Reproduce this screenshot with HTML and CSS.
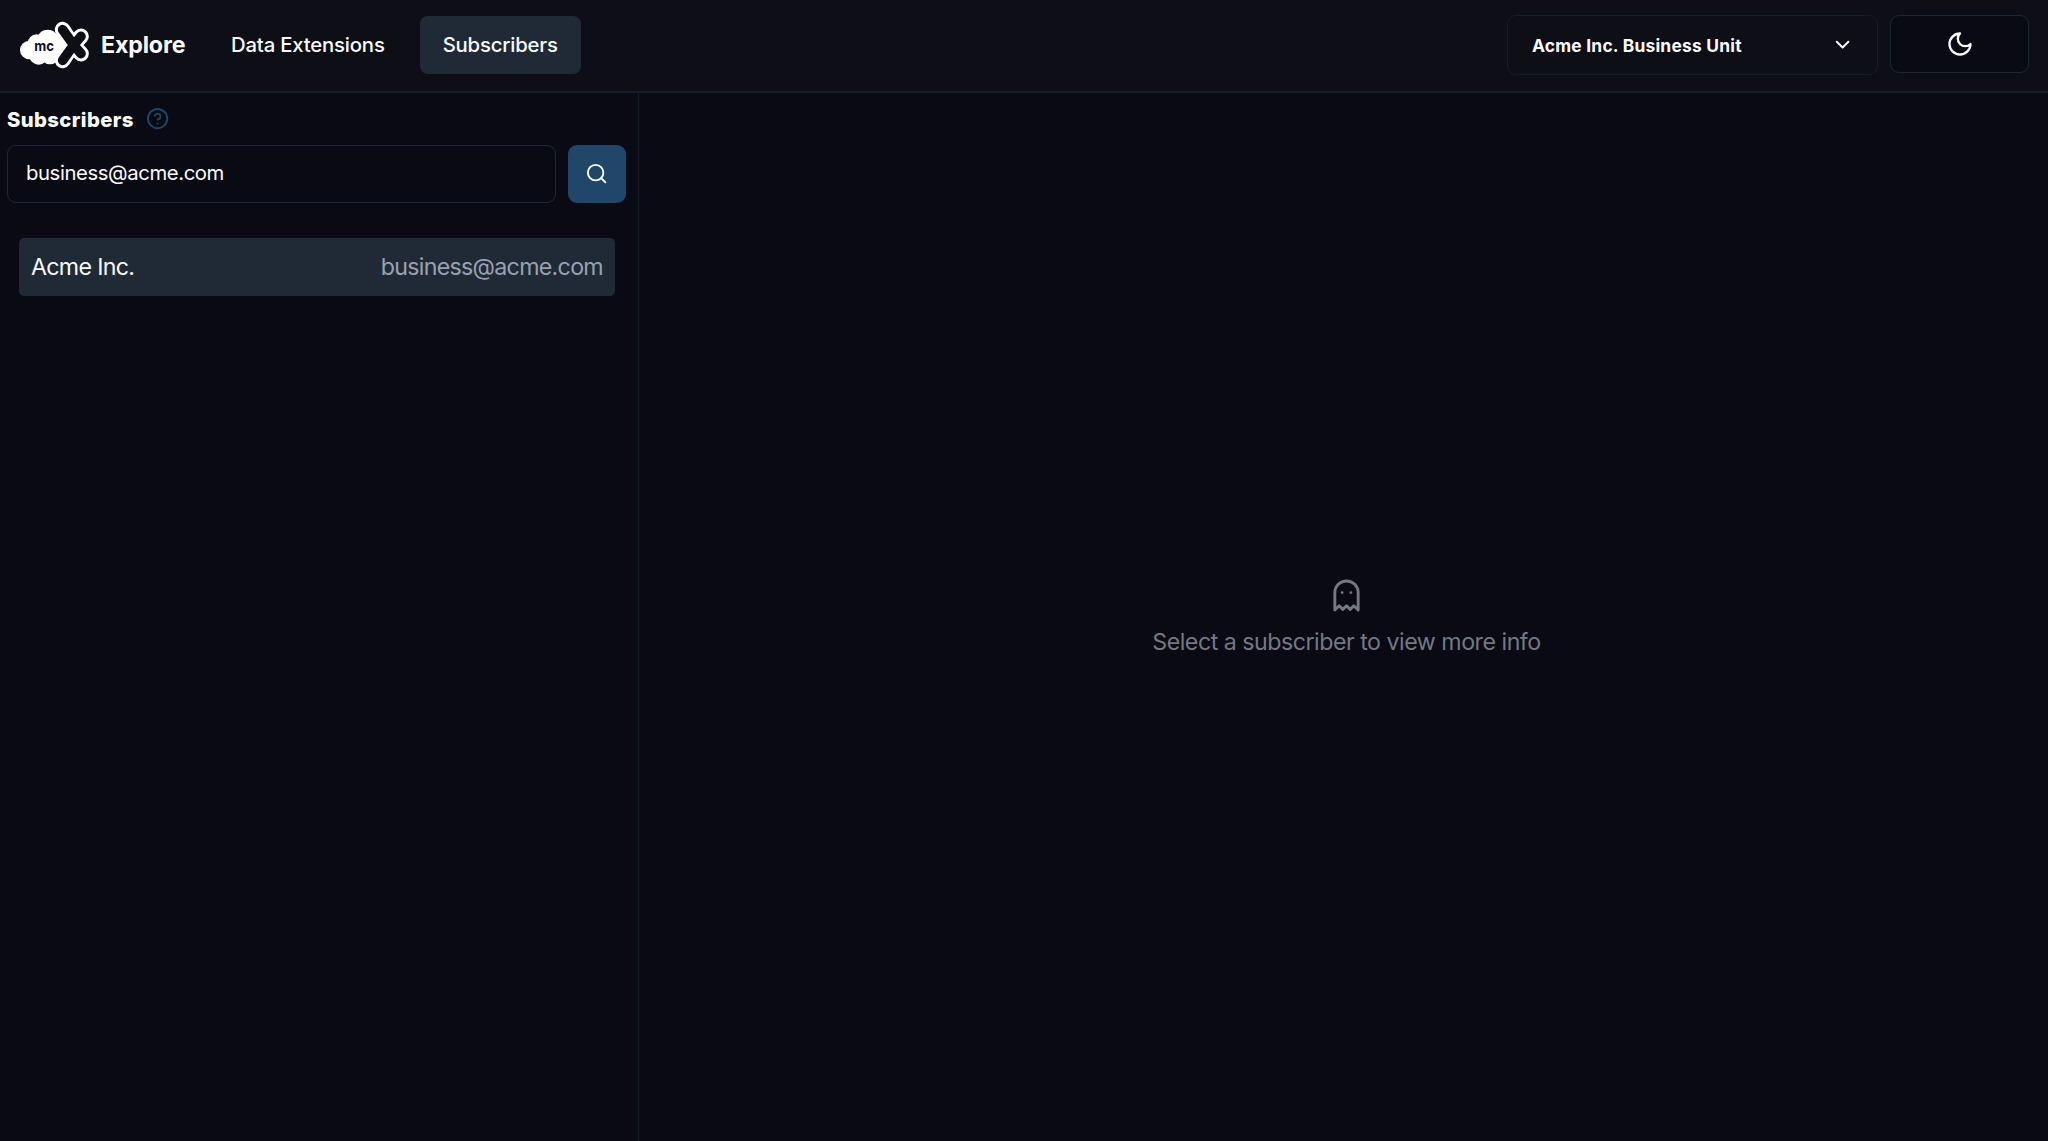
FILE: index.html
```html
<!DOCTYPE html>
<html lang="en">
<head>
    <meta charset="UTF-8">
    <meta name="viewport" content="width=device-width, initial-scale=1.0">
    <title>MC Explore</title>
    <link rel="stylesheet" href="styles.css">
</head>
<body>
    <header class="topbar">
        <div class="brand">
            <svg class="logo" viewBox="57 60 213 150" aria-hidden="true">
                <g fill="#fff">
                    <circle cx="88" cy="150" r="28"/>
                    <circle cx="110" cy="130" r="27"/>
                    <circle cx="143" cy="122" r="33"/>
                    <circle cx="116" cy="165" r="29"/>
                    <circle cx="150" cy="164" r="29"/>
                    <path d="M140 100h30l40 35-40 45h-30z"/>
                </g>
                <path class="cross-outer" d="M188 89l30 46-30 46M243 109l-25 26 25 26"/>
                <path class="cross-inner" d="M188 89l33 46-33 46M243 109l-22 26 22 26"/>
                <text class="logo-text" x="103" y="153" textLength="59" lengthAdjust="spacingAndGlyphs">mc</text>
            </svg>
            <span class="brand-name">Explore</span>
        </div>
        <nav class="tabs">
            <a class="tab">Data Extensions</a>
            <a class="tab active">Subscribers</a>
        </nav>
        <div class="actions">
            <button class="unit-select">
                <span>Acme Inc. Business Unit</span>
                <svg class="icon" viewBox="0 0 24 24"><path d="m6 9 6 6 6-6"/></svg>
            </button>
            <button class="theme-toggle" aria-label="Toggle theme">
                <svg class="icon" viewBox="0 0 24 24"><path d="M12 3a6 6 0 0 0 9 9 9 9 0 1 1-9-9Z"/></svg>
            </button>
        </div>
    </header>

    <div class="content">
        <aside class="sidebar">
            <div class="sidebar-title">
                <h1>Subscribers</h1>
                <svg class="icon help" viewBox="0 0 24 24">
                    <circle cx="12" cy="12" r="10"/>
                    <path d="M9.09 9a3 3 0 0 1 5.83 1c0 2-3 3-3 3M12 17h.01"/>
                </svg>
            </div>
            <div class="search">
                <input class="search-input" type="text" value="business@acme.com">
                <button class="search-button" aria-label="Search">
                    <svg class="icon" viewBox="0 0 24 24"><circle cx="11" cy="11" r="8"/><path d="m21 21-4.3-4.3"/></svg>
                </button>
            </div>
            <div class="results">
                <div class="result">
                    <span>Acme Inc.</span>
                    <span class="result-email">business@acme.com</span>
                </div>
            </div>
        </aside>
        <main class="empty">
            <svg class="icon ghost" viewBox="0 0 24 24">
                <path d="M9 10h.01M15 10h.01M12 2a8 8 0 0 0-8 8v12l3-3 2.5 2.5L12 19l2.5 2.5L17 19l3 3V10a8 8 0 0 0-8-8z"/>
            </svg>
            <p>Select a subscriber to view more info</p>
        </main>
    </div>
</body>
</html>
```

FILE: styles.css
```css
* {
    box-sizing: border-box;
}

body {
    margin: 0;
    height: 100vh;
    display: flex;
    flex-direction: column;
    overflow: hidden;
    background-color: #090a13;
    color: #fafafa;
    font-family: Inter, sans-serif;
    font-size: 23.2px;
}

button, input {
    font-family: inherit;
    color: inherit;
    margin: 0;
}

.icon {
    width: 23.2px;
    height: 23.2px;
    flex-shrink: 0;
    fill: none;
    stroke: currentColor;
    stroke-width: 2;
    stroke-linecap: round;
    stroke-linejoin: round;
}

.topbar {
    height: 93px;
    flex-shrink: 0;
    display: flex;
    align-items: flex-start;
    padding: 0 19px;
    background-color: #0d0e16;
    border-bottom: 2px solid #151d27;
}

.brand {
    display: flex;
    align-items: center;
    height: 90px;
    width: 189px;
    gap: 11px;
}

.logo {
    width: 71px;
    height: 50px;
}

.cross-outer, .cross-inner {
    fill: none;
    stroke: #fff;
    stroke-width: 47;
    stroke-linecap: round;
    stroke-linejoin: round;
}

.cross-inner {
    stroke: #0d0e16;
    stroke-width: 29;
}

.logo-text {
    fill: #0d0e16;
    font-size: 44px;
    font-weight: 700;
}

.brand-name {
    font-weight: 700;
    letter-spacing: -0.15px;
}

.tabs {
    display: flex;
    gap: 12px;
    padding-top: 16px;
}

.tab {
    height: 58px;
    padding: 0 23px 2px;
    display: flex;
    align-items: center;
    border-radius: 8px;
    font-size: 20.3px;
    font-weight: 500;
    letter-spacing: -0.17px;
}

.tab.active {
    background-color: #202a37;
}

.actions {
    margin-left: auto;
    display: flex;
    align-items: flex-start;
    gap: 12px;
    padding-top: 15px;
}

.unit-select {
    width: 371px;
    height: 60px;
    display: flex;
    align-items: center;
    justify-content: space-between;
    padding: 0 23px 0 24px;
    background: none;
    border: 1px solid #141d27;
    border-radius: 9px;
    font-size: 17.4px;
    font-weight: 700;
    letter-spacing: 0.22px;
}

.theme-toggle {
    width: 139px;
    height: 58px;
    display: flex;
    align-items: center;
    justify-content: center;
    padding: 0;
    background-color: #090a13;
    border: 1px solid #1b2735;
    border-radius: 9px;
}

.theme-toggle .icon {
    width: 28px;
    height: 28px;
}

.content {
    flex: 1;
    display: flex;
}

.sidebar {
    width: 639px;
    border-right: 1px solid #151b27;
    padding: 8px 12px 0 7px;
}

.sidebar-title {
    height: 36px;
    display: flex;
    align-items: center;
    gap: 12px;
}

.sidebar-title h1 {
    margin: 0;
    font-size: 20.3px;
    font-weight: 800;
    letter-spacing: 0.38px;
}

.help {
    color: #1d4469;
}

.search {
    display: flex;
    gap: 12px;
    margin-top: 8px;
}

.search-input {
    flex: 1;
    min-width: 0;
    height: 58px;
    padding: 0 18px 3px;
    background: none;
    border: 1px solid #1e2937;
    border-radius: 9px;
    font-size: 20.3px;
    letter-spacing: -0.4px;
}

.search-button {
    width: 58px;
    height: 58px;
    display: flex;
    align-items: center;
    justify-content: center;
    padding: 0;
    background-color: #20466a;
    border: none;
    border-radius: 9px;
}

.results {
    padding: 35px 11px 0 12px;
}

.result {
    height: 58px;
    padding: 0 12px;
    display: flex;
    align-items: center;
    justify-content: space-between;
    background-color: #202a37;
    border-radius: 5px;
    letter-spacing: -0.69px;
}

.result-email {
    color: #98a1b0;
}

.empty {
    flex: 1;
    display: flex;
    flex-direction: column;
    align-items: center;
    justify-content: center;
    gap: 12px;
    padding: 4px 0 0 6px;
    color: #747883;
    letter-spacing: -0.49px;
}

.ghost {
    width: 35px;
    height: 35px;
}

.empty p {
    margin: 0;
    line-height: 35px;
}
```
